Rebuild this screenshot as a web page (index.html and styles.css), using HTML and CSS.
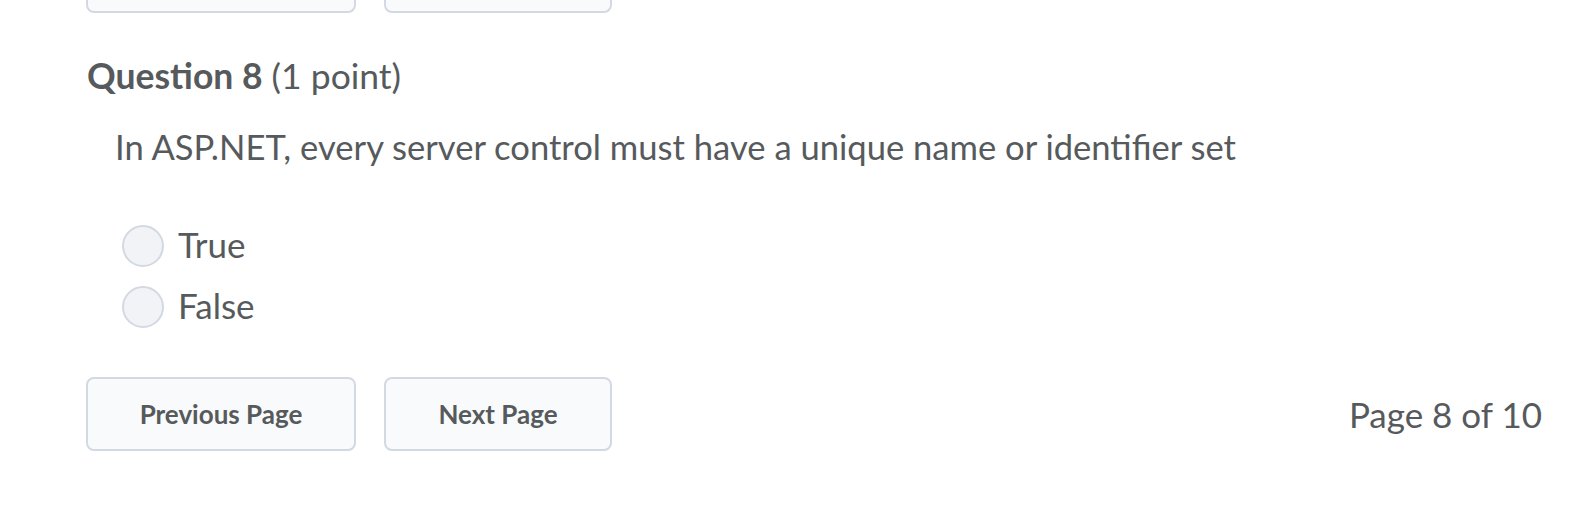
FILE: index.html
```html
<!DOCTYPE html>
<html>
<head>
<meta charset="utf-8">
<link rel="stylesheet" href="styles.css">
</head>
<body>
<div class="page">
  <div class="nav nav-top">
    <button class="btn btn-prev">Previous Page</button>
    <button class="btn btn-next">Next Page</button>
  </div>
  <h2 class="qtitle"><strong>Question 8</strong> <span class="pts">(1 point)</span></h2>
  <p class="qtext">In ASP.NET, every server control must have a unique name or identifier set</p>
  <div class="options">
    <label class="opt"><span class="radio"></span><span class="lbl">True</span></label>
    <label class="opt"><span class="radio"></span><span class="lbl">False</span></label>
  </div>
  <div class="nav nav-bottom">
    <button class="btn btn-prev">Previous Page</button>
    <button class="btn btn-next">Next Page</button>
    <span class="pageinfo">Page 8 of 10</span>
  </div>
</div>
</body>
</html>
```
FILE: styles.css
```css
html, body {
  margin: 0;
  padding: 0;
  background: #ffffff;
}
body {
  font-family: Lato, "Open Sans", sans-serif;
  color: #565a5c;
  width: 1592px;
  height: 508px;
  overflow: hidden;
}
.page {
  padding: 0 50px 0 86px;
}
.nav {
  display: flex;
  align-items: center;
  gap: 28px;
}
.nav-top {
  margin-top: -61px;
}
.btn {
  box-sizing: border-box;
  height: 74px;
  border: 2px solid #d3d9e3;
  border-radius: 8px;
  background: #f9fafb;
  font-family: Lato, sans-serif;
  font-weight: 700;
  font-size: 26px;
  color: #565a5c;
  padding: 0;
}
.btn-prev { width: 270px; }
.btn-next { width: 228px; }
.qtitle {
  margin: 41px 0 0 1px;
  font-size: 35.5px;
  line-height: 44px;
  font-weight: 400;
}
.qtitle strong { font-weight: 700; }
.qtext {
  margin: 27px 0 0 29px;
  font-size: 34.6px;
  line-height: 44px;
}
.options {
  margin: 56px 0 0 36px;
  display: flex;
  flex-direction: column;
  gap: 19px;
}
.opt {
  display: flex;
  align-items: center;
  gap: 14px;
  height: 42px;
}
.radio {
  box-sizing: border-box;
  flex: none;
  width: 42px;
  height: 42px;
  border-radius: 50%;
  border: 2px solid #d3d9e3;
  background: #f1f3f6;
}
.lbl {
  font-size: 35px;
  line-height: 42px;
  margin-top: -5px;
}
.nav-bottom {
  margin-top: 49px;
}
.pageinfo {
  margin-left: auto;
  font-size: 35px;
}
```
